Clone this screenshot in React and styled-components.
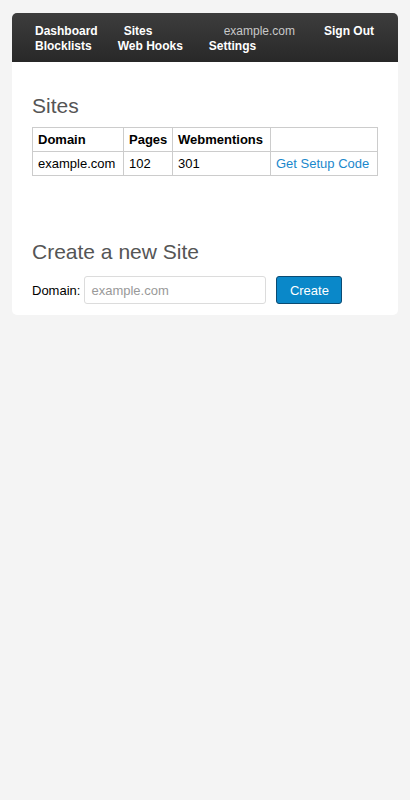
import React from "react";
import styled, { createGlobalStyle } from "styled-components";

const GlobalStyle = createGlobalStyle`
  html, body {
    margin: 0;
    padding: 0;
    background: #f4f4f4;
    font-family: "Liberation Sans", Arial, sans-serif;
    color: #000;
  }
`;

const sites = [{ domain: "example.com", pages: 102, webmentions: 301 }];

const Page = styled.div`
  margin: 13px 12px;
`;

const Nav = styled.nav`
  background: linear-gradient(#3d3d3d, #282828);
  border-radius: 5px 5px 0 0;
  padding: 11px 11px 8px 10px;
  height: 30px;
`;

const NavRow = styled.div`
  display: flex;
  align-items: center;
  line-height: 15px;
`;

const NavGroup = styled.div`
  display: flex;
  margin-left: ${(p) => (p.$right ? "auto" : "0")};
`;

const NavLink = styled.a`
  padding: 0 ${(p) => p.$pad || 13}px;
  font-size: 12px;
  font-weight: ${(p) => (p.$muted ? "normal" : "bold")};
  color: ${(p) => (p.$muted ? "#c8c8c8" : "#fff")};
  text-decoration: none;
  white-space: nowrap;
  cursor: pointer;
`;

const Panel = styled.main`
  background: #fff;
  border-radius: 0 0 5px 5px;
  padding: 32px 20px 11px;
`;

const Heading = styled.h2`
  margin: ${(p) => p.$top || 0}px 0 10px;
  font-size: 21px;
  line-height: 23px;
  font-weight: normal;
  color: #555;
`;

const Table = styled.table`
  width: 100%;
  table-layout: fixed;
  border-collapse: collapse;
  font-size: 13px;
  line-height: 15px;
`;

const Th = styled.th`
  box-sizing: border-box;
  border: 1px solid #ccc;
  padding: 4px 2px 4px 5px;
  text-align: left;
  font-weight: bold;
  white-space: nowrap;
  width: ${(p) => (p.$w ? `${p.$w}px` : "auto")};
`;

const Td = styled.td`
  border: 1px solid #ccc;
  padding: 4px 2px 4px 5px;
  white-space: nowrap;
`;

const Link = styled.a`
  color: #1a88cc;
  text-decoration: none;
  cursor: pointer;
`;

const Form = styled.form`
  display: flex;
  align-items: center;
  margin-top: 13px;
  font-size: 13px;
`;

const Label = styled.label`
  margin-right: 4px;
`;

const Input = styled.input`
  box-sizing: border-box;
  width: 182px;
  height: 28px;
  border: 1px solid #dcdcdc;
  border-radius: 3px;
  padding: 0 6px;
  font-family: inherit;
  font-size: 13px;
  &::placeholder {
    color: #999;
  }
`;

const Button = styled.button`
  box-sizing: border-box;
  margin-left: 10px;
  width: 66px;
  height: 28px;
  background: #0a88c9;
  border: 1px solid #0b4b73;
  border-radius: 3px;
  color: #fff;
  font-family: inherit;
  font-size: 13px;
  cursor: pointer;
`;

export default function App() {
  return (
    <Page>
      <GlobalStyle />
      <Nav>
        <NavRow>
          <NavGroup>
            <NavLink>Dashboard</NavLink>
            <NavLink>Sites</NavLink>
          </NavGroup>
          <NavGroup $right>
            <NavLink $muted $pad={16}>example.com</NavLink>
            <NavLink>Sign Out</NavLink>
          </NavGroup>
        </NavRow>
        <NavRow>
          <NavLink>Blocklists</NavLink>
          <NavLink>Web Hooks</NavLink>
          <NavLink>Settings</NavLink>
        </NavRow>
      </Nav>
      <Panel>
        <Heading>Sites</Heading>
        <Table>
          <thead>
            <tr>
              <Th $w={91}>Domain</Th>
              <Th $w={49}>Pages</Th>
              <Th $w={98}>Webmentions</Th>
              <Th></Th>
            </tr>
          </thead>
          <tbody>
            {sites.map((s) => (
              <tr key={s.domain}>
                <Td>{s.domain}</Td>
                <Td>{s.pages}</Td>
                <Td>{s.webmentions}</Td>
                <Td>
                  <Link>Get Setup Code</Link>
                </Td>
              </tr>
            ))}
          </tbody>
        </Table>
        <Heading $top={64}>Create a new Site</Heading>
        <Form onSubmit={(e) => e.preventDefault()}>
          <Label>Domain:</Label>
          <Input placeholder="example.com" />
          <Button type="submit">Create</Button>
        </Form>
      </Panel>
    </Page>
  );
}
